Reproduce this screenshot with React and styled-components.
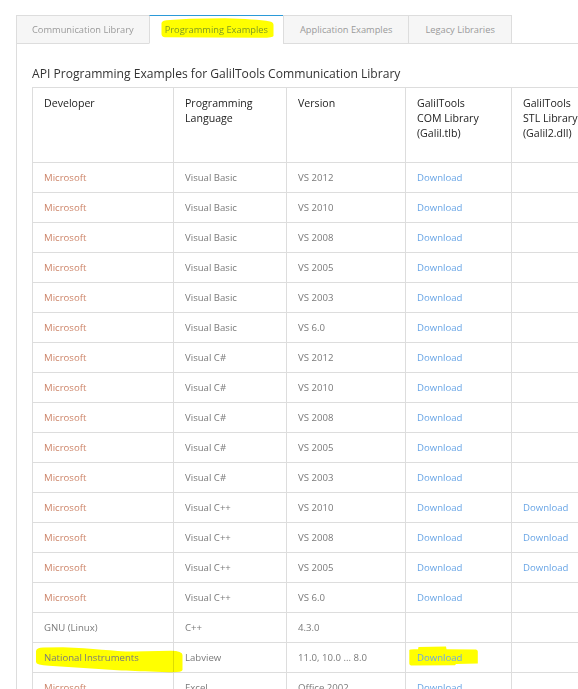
import React from "react";
import styled, { createGlobalStyle } from "styled-components";

const GlobalStyle = createGlobalStyle`
  html, body { margin: 0; padding: 0; background: #fff; overflow: hidden; }
  body { font-family: "Open Sans", "Liberation Sans", sans-serif; }
`;

const Page = styled.div`
  width: 760px;
  padding: 15px 0 0 16px;
  box-sizing: border-box;
`;

const TabBar = styled.div`
  display: flex;
  align-items: stretch;
  position: relative;
  z-index: 1;
  margin-bottom: -1px;
`;

const Tab = styled.div`
  position: relative;
  height: 29px;
  box-sizing: border-box;
  display: flex;
  align-items: center;
  padding: 0 ${(p) => p.$pad || 15}px;
  margin-right: -1px;
  font-size: 9.3px;
  color: ${(p) => (p.$active ? "#7f9a22" : "#9a9a9a")};
  background: ${(p) => (p.$active ? "#fff" : "#f6f6f6")};
  border: 1px solid #dddddd;
  border-top-color: ${(p) => (p.$active ? "#2b9ad8" : "#dddddd")};
  border-bottom-color: ${(p) => (p.$active ? "#fff" : "#dddddd")};
  white-space: nowrap;
`;

const Panel = styled.div`
  border-left: 1px solid #dddddd;
  border-top: 1px solid #dddddd;
  padding: 21px 0 0 15px;
`;

const Heading = styled.h4`
  margin: 0 0 4px;
  font-size: 12.1px;
  line-height: 18px;
  font-weight: 400;
  color: #333;
`;

const Table = styled.table`
  border-collapse: collapse;
  table-layout: fixed;
  width: 700px;
`;

const Th = styled.th`
  border: 1px solid #dddddd;
  height: 75px;
  box-sizing: border-box;
  padding: 8px 11px 0;
  text-align: left;
  vertical-align: top;
  font-size: 10.6px;
  line-height: 15px;
  font-weight: 400;
  color: #222;
  white-space: nowrap;
`;

const Td = styled.td`
  position: relative;
  border: 1px solid #dddddd;
  height: 30px;
  box-sizing: border-box;
  padding: 0 11px;
  font-size: 9.6px;
  color: ${(p) => (p.$vendor ? "#cd8468" : "#7a7a7a")};
  white-space: nowrap;
`;

const Link = styled.a`
  color: #6aa6e6;
  text-decoration: none;
`;

const Mark = styled.svg`
  position: absolute;
  left: 0;
  top: 0;
  overflow: visible;
  pointer-events: none;
  mix-blend-mode: multiply;
`;

const Label = styled.span`
  position: relative;
`;

const Highlight = ({ d }) => (
  <Mark width="1" height="1">
    <path d={d} fill="#ffff00" />
  </Mark>
);

const TAB_MARK =
  "M11.5,7 Q12,4 20,4 L40,2.8 L75,2.3 Q105,3 120,5.5 Q123.5,6 123.5,9 L123.5,20 Q123,22 110,21.8 L60,21.5 L15,21.3 Q11.5,21 11.5,18 Z";
const NI_MARK =
  "M3,8 Q3.5,4.5 10,4.5 L30,4.2 C60,5 80,8.3 100,8.6 L138,7.8 Q149.5,8 149.5,12 L149.5,27 Q149,29.6 136,29.2 C100,28.3 82,27.2 62,25.8 L16,22.8 Q3,22.3 3,19 Z";
const DL_MARK =
  "M3.3,7 Q3.5,6.2 8,6.2 L12,6.2 L12.5,4 L40,3.6 L40.5,6.2 L70,6.4 Q71.8,6.6 71.8,8.5 L71.8,20.4 L50,21 L49,22.3 L5,22.4 Q3.3,22.3 3.3,20.5 Z";

const rows = [
  ["Microsoft", "Visual Basic", "VS 2012", true, false],
  ["Microsoft", "Visual Basic", "VS 2010", true, false],
  ["Microsoft", "Visual Basic", "VS 2008", true, false],
  ["Microsoft", "Visual Basic", "VS 2005", true, false],
  ["Microsoft", "Visual Basic", "VS 2003", true, false],
  ["Microsoft", "Visual Basic", "VS 6.0", true, false],
  ["Microsoft", "Visual C#", "VS 2012", true, false],
  ["Microsoft", "Visual C#", "VS 2010", true, false],
  ["Microsoft", "Visual C#", "VS 2008", true, false],
  ["Microsoft", "Visual C#", "VS 2005", true, false],
  ["Microsoft", "Visual C#", "VS 2003", true, false],
  ["Microsoft", "Visual C++", "VS 2010", true, true],
  ["Microsoft", "Visual C++", "VS 2008", true, true],
  ["Microsoft", "Visual C++", "VS 2005", true, true],
  ["Microsoft", "Visual C++", "VS 6.0", true, false],
  ["GNU (Linux)", "C++", "4.3.0", false, false],
  ["National Instruments", "Labview", "11.0, 10.0 ... 8.0", true, false, true],
  ["Microsoft", "Excel", "Office 2002", true, false],
];

export default function App() {
  return (
    <>
      <GlobalStyle />
      <Page>
        <TabBar>
          <Tab>Communication Library</Tab>
          <Tab $active>
            <Highlight d={TAB_MARK} />
            <Label>Programming Examples</Label>
          </Tab>
          <Tab $pad={16}>Application Examples</Tab>
          <Tab $pad={16}>Legacy Libraries</Tab>
        </TabBar>
        <Panel>
          <Heading>API Programming Examples for GalilTools Communication Library</Heading>
          <Table>
            <colgroup>
              <col style={{ width: 141 }} />
              <col style={{ width: 113 }} />
              <col style={{ width: 119 }} />
              <col style={{ width: 106 }} />
              <col style={{ width: 110 }} />
              <col />
            </colgroup>
            <thead>
              <tr>
                <Th>Developer</Th>
                <Th>
                  Programming
                  <br />
                  Language
                </Th>
                <Th>Version</Th>
                <Th>
                  GalilTools
                  <br />
                  COM Library
                  <br />
                  (Galil.tlb)
                </Th>
                <Th>
                  GalilTools
                  <br />
                  STL Library
                  <br />
                  (Galil2.dll)
                </Th>
                <Th />
              </tr>
            </thead>
            <tbody>
              {rows.map(([dev, lang, ver, com, stl, marked], i) => (
                <tr key={i}>
                  <Td $vendor={dev === "Microsoft"}>
                    {marked && <Highlight d={NI_MARK} />}
                    <Label>{dev}</Label>
                  </Td>
                  <Td>{lang}</Td>
                  <Td>{ver}</Td>
                  <Td>
                    {marked && <Highlight d={DL_MARK} />}
                    {com && (
                      <Label>
                        <Link href="#">Download</Link>
                      </Label>
                    )}
                  </Td>
                  <Td>{stl && <Link href="#">Download</Link>}</Td>
                  <Td />
                </tr>
              ))}
            </tbody>
          </Table>
        </Panel>
      </Page>
    </>
  );
}
